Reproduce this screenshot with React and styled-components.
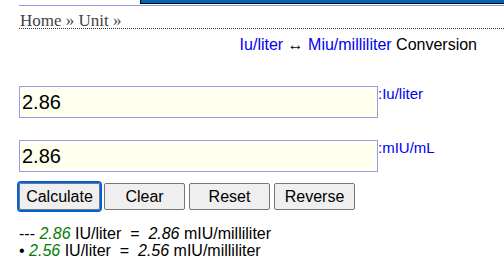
import React, { useState } from 'react';
import styled, { createGlobalStyle } from 'styled-components';

const GlobalStyle = createGlobalStyle`
  html, body {
    margin: 0;
    padding: 0;
    background: #fff;
  }
  body {
    font-family: "Liberation Sans", Arial, sans-serif;
  }
`;

const Page = styled.div`
  width: 504px;
  height: 276px;
  overflow: hidden;
  padding-left: 19px;
  box-sizing: border-box;
`;

const TopStrip = styled.div`
  display: flex;
  height: 6px;
  border-bottom: 1px solid #9999ee;
  box-sizing: border-box;
`;

const TopSpacer = styled.div`
  width: 121px;
`;

const TopBanner = styled.div`
  flex: 1;
  height: 5px;
  margin-top: -1px;
  background: #0066b3;
  border: 1px solid #000;
  border-right: none;
  box-sizing: border-box;
`;

const Crumbs = styled.div`
  font-family: "Liberation Serif", "Times New Roman", serif;
  font-size: 17px;
  color: #444;
  line-height: 20px;
  padding: 5px 0 0 1px;
  height: 23px;
  box-sizing: border-box;
  border-bottom: 1px dotted #333;
`;

const Title = styled.div`
  text-align: right;
  padding-right: 27px;
  margin-top: 7px;
  font-size: 16px;
  line-height: 18px;
  color: #000;
`;

const Link = styled.span`
  color: #0000ee;
`;

const Form = styled.div`
  margin-top: 32px;
  display: flex;
  flex-direction: column;
  gap: 22px;
`;

const Row = styled.div`
  display: flex;
  align-items: flex-start;
`;

const Field = styled.input`
  width: 359px;
  height: 32px;
  box-sizing: border-box;
  border: 1px solid #9999ee;
  background: #ffffee;
  font-family: "Liberation Sans", Arial, sans-serif;
  font-size: 20px;
  padding: 0 2px;
  color: #000;
  outline: none;
`;

const Unit = styled.span`
  color: #0000ee;
  font-size: 15px;
  line-height: 16px;
`;

const Buttons = styled.div`
  display: flex;
  gap: 4px;
  margin-top: 11px;
`;

const Button = styled.button`
  width: 81px;
  height: 27px;
  box-sizing: border-box;
  font-family: "Liberation Sans", Arial, sans-serif;
  font-size: 16px;
  color: #000;
  background: #efefef;
  border: 1px solid #767676;
  border-radius: 2px;
  padding: 0;
  outline: ${p => (p.$focused ? '2px solid #0060df' : 'none')};
  outline-offset: 0;
`;

const Results = styled.div`
  margin-top: 15px;
  font-size: 16px;
  line-height: 17px;
  color: #000;
  white-space: pre;
`;

const Num = styled.i`
  color: ${p => (p.$green ? '#008000' : '#000')};
`;

export default function App() {
  const [a, setA] = useState('2.86');
  const [b, setB] = useState('2.86');

  return (
    <Page>
      <GlobalStyle />
      <TopStrip>
        <TopSpacer />
        <TopBanner />
      </TopStrip>
      <Crumbs>Home » Unit »</Crumbs>
      <Title>
        <Link>Iu/liter</Link> ↔ <Link>Miu/milliliter</Link> Conversion
      </Title>
      <Form>
        <Row>
          <Field value={a} onChange={e => setA(e.target.value)} />
          <Unit>:Iu/liter</Unit>
        </Row>
        <Row>
          <Field value={b} onChange={e => setB(e.target.value)} />
          <Unit>:mIU/mL</Unit>
        </Row>
      </Form>
      <Buttons>
        <Button $focused>Calculate</Button>
        <Button>Clear</Button>
        <Button>Reset</Button>
        <Button>Reverse</Button>
      </Buttons>
      <Results>
        <div>--- <Num $green>2.86</Num> IU/liter  =  <Num>2.86</Num> mIU/milliliter</div>
        <div>• <Num $green>2.56</Num> IU/liter  =  <Num>2.56</Num> mIU/milliliter</div>
      </Results>
    </Page>
  );
}
